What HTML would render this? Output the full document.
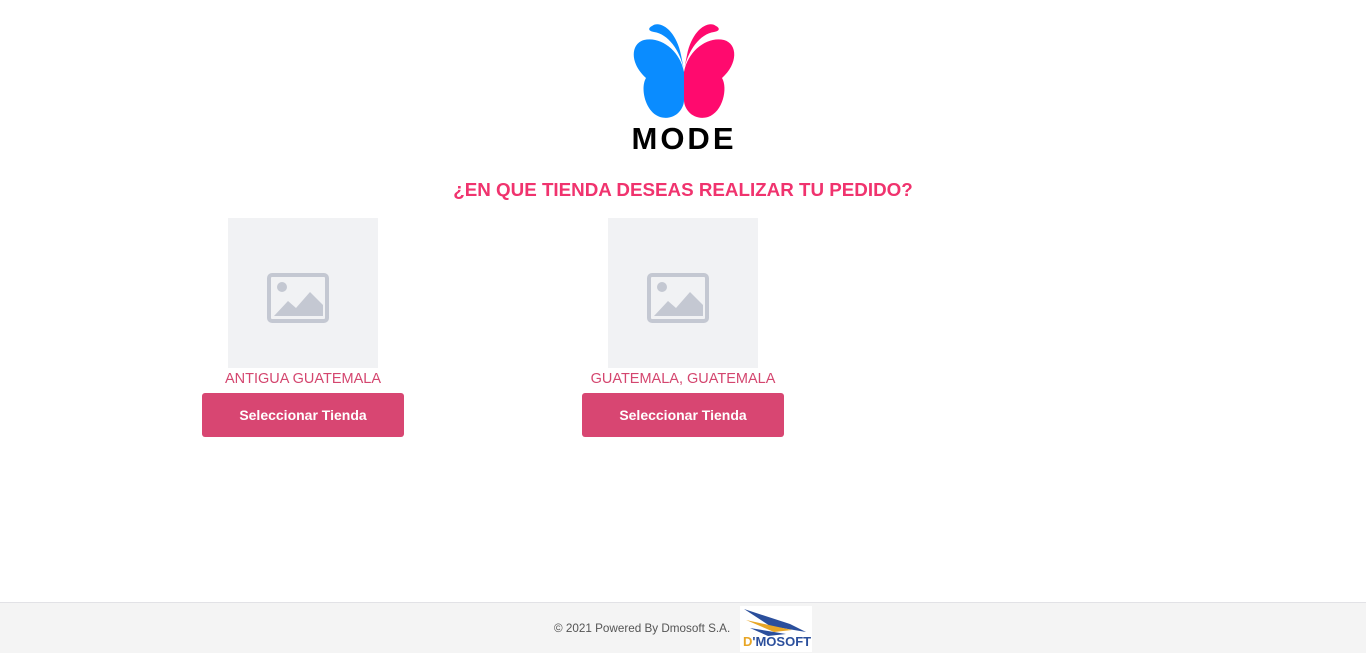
<!DOCTYPE html>
<html><head><meta charset="utf-8"><style>
body{margin:0;width:1366px;height:652px;background:#fff;font-family:"Liberation Sans",sans-serif;position:relative;overflow:hidden}
.h{position:absolute;top:179px;left:0;width:1366px;text-align:center;color:#f0336e;font-weight:bold;font-size:18.8px}
.ph{position:absolute;top:218px;width:150px;height:150px;background:#f1f2f4}
.ph svg{position:absolute;left:39px;top:55px}
.nm{position:absolute;top:371px;width:240px;text-align:center;color:#d4466f;font-size:14.5px}
.bt{position:absolute;top:393px;width:202px;height:44px;background:#d84672;border-radius:3px;color:#fff;font-weight:bold;font-size:14px;text-align:center;line-height:44px}
.ft{position:absolute;top:602px;left:0;width:1366px;height:50px;background:#f4f4f4;border-top:1px solid #e2e2e6}
</style></head><body>
<svg style="position:absolute;left:0;top:0" width="1366" height="160">
<path d="M652 26 C660 20 676 30 681 55 L684 70 C680 50 668 34 654 32 C648 31 648 28 652 26Z" fill="#0a8cff"/>
<path d="M716 26 C708 20 692 30 687 55 L684 70 C688 50 700 34 714 32 C720 31 720 28 716 26Z" fill="#ff0a6e"/>
<path d="M684 72 C680 50 660 36 644 40 C630 44 630 64 646 78 C640 88 645 112 660 117 C674 121 684 110 684 100Z" fill="#0a8cff"/>
<path d="M684 72 C688 50 708 36 724 40 C738 44 738 64 722 78 C728 88 723 112 708 117 C694 121 684 110 684 100Z" fill="#ff0a6e"/>
<text x="684" y="149" text-anchor="middle" font-family="Liberation Sans" font-weight="bold" font-size="31" letter-spacing="3" fill="#000">MODE</text>
</svg>
<div class="h">¿EN QUE TIENDA DESEAS REALIZAR TU PEDIDO?</div>
<div class="ph" style="left:228px"><svg width="62" height="50" viewBox="0 0 62 50"><rect x="2" y="2" width="58" height="46" rx="3" fill="none" stroke="#c4c8d2" stroke-width="4"/><circle cx="15" cy="14" r="5" fill="#c4c8d2"/><path d="M7 43 L21 28 L29 35 L43 19 L56 32 L56 43Z" fill="#c4c8d2"/></svg></div>
<div class="ph" style="left:608px"><svg width="62" height="50" viewBox="0 0 62 50"><rect x="2" y="2" width="58" height="46" rx="3" fill="none" stroke="#c4c8d2" stroke-width="4"/><circle cx="15" cy="14" r="5" fill="#c4c8d2"/><path d="M7 43 L21 28 L29 35 L43 19 L56 32 L56 43Z" fill="#c4c8d2"/></svg></div>
<div class="nm" style="left:183px">ANTIGUA GUATEMALA</div>
<div class="nm" style="left:563px">GUATEMALA, GUATEMALA</div>
<div class="bt" style="left:202px">Seleccionar Tienda</div>
<div class="bt" style="left:582px">Seleccionar Tienda</div>
<div class="ft">
<div style="position:absolute;left:554px;top:19px;font-size:11.7px;color:#555">© 2021 Powered By Dmosoft S.A.</div>
<div style="position:absolute;left:740px;top:3px;width:72px;height:46px;background:#fff">
<svg width="72" height="46"><path d="M4 3 L50 18 L66 26 L30 20 Z" fill="#2b4f9c"/><path d="M6 14 L52 24 L34 26 Z" fill="#e8a626"/><path d="M10 22 L46 28 L28 30Z" fill="#2b4f9c"/>
<text x="3" y="40" font-family="Liberation Sans" font-weight="bold" font-size="13" fill="#2b4f9c"><tspan fill="#e8a626">D</tspan>'MOSOFT</text></svg></div>
</div>
</body></html>
